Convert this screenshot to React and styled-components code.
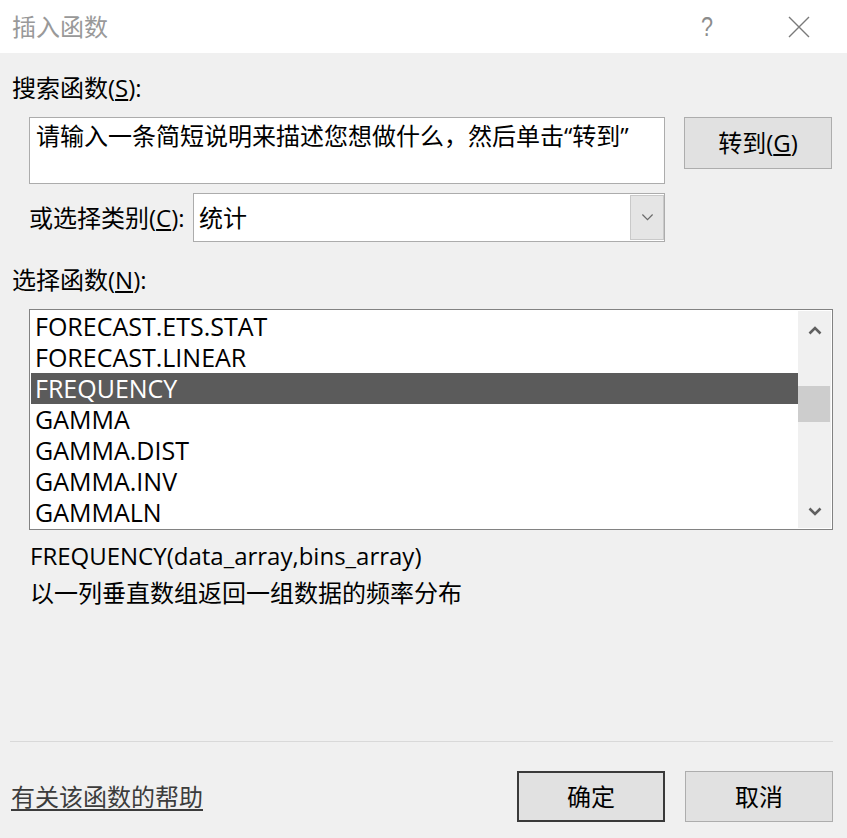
import React from 'react';
import styled, { createGlobalStyle } from 'styled-components';

const Global = createGlobalStyle`
  html, body { margin: 0; padding: 0; background: #f0f0f0; }
  body { font-family: "Open Sans", "Noto Sans CJK SC", sans-serif; }
`;

const Dialog = styled.div`
  width: 847px;
  height: 838px;
  background: #f0f0f0;
  display: flex;
  flex-direction: column;
  overflow: hidden;
  font-family: "Open Sans", "Noto Sans CJK SC", sans-serif;
  font-size: 24px;
  color: #000;
`;

const TitleBar = styled.div`
  height: 53px;
  flex-shrink: 0;
  background: #fff;
  display: flex;
  align-items: center;
  padding: 0 28px 0 12px;
  gap: 57px;
`;

const Title = styled.div`
  flex: 1;
  color: #999;
  line-height: 32px;
`;

const HelpGlyph = styled.span`
  width: 30px;
  text-align: center;
  color: #8c8c8c;
  font-family: "Liberation Sans", sans-serif;
  font-size: 27px;
  line-height: 32px;
  transform: scaleX(0.8);
`;

const CloseBox = styled.div`
  width: 40px;
  height: 32px;
  display: flex;
  align-items: center;
  justify-content: center;
`;

const Body = styled.div`
  flex: 1;
  padding: 0 14px 0 12px;
  display: flex;
  flex-direction: column;
`;

const Label = styled.div`
  line-height: 32px;
  margin-top: ${p => p.$mt}px;
  padding-left: ${p => p.$pl || 0}px;
  white-space: nowrap;
`;

const SearchRow = styled.div`
  display: flex;
  align-items: flex-start;
  gap: 19px;
  margin-top: 13px;
  padding-left: 17px;
`;

const SearchBox = styled.div`
  box-sizing: border-box;
  width: 636px;
  height: 67px;
  border: 1px solid #acacac;
  background: #fff;
  padding: 2px 6px;
  line-height: 32px;
  white-space: nowrap;
  overflow: hidden;
`;

const Button = styled.div`
  box-sizing: border-box;
  width: ${p => p.$w}px;
  height: ${p => p.$h}px;
  border: ${p => (p.$default ? '2px solid #3a3a3a' : '1px solid #adadad')};
  background: #e1e1e1;
  display: flex;
  align-items: center;
  justify-content: center;
  line-height: 32px;
  white-space: nowrap;
`;

const CategoryRow = styled.div`
  display: flex;
  align-items: center;
  margin-top: 9px;
  padding-left: 17px;
`;

const CategoryLabel = styled.div`
  width: 164px;
  line-height: 32px;
  white-space: nowrap;
`;

const Select = styled.div`
  box-sizing: border-box;
  width: 472px;
  height: 49px;
  border: 1px solid #acacac;
  background: #fff;
  display: flex;
  align-items: center;
  padding: 1px 0 1px 5px;
`;

const SelectValue = styled.div`
  flex: 1;
  line-height: 32px;
`;

const DropButton = styled.div`
  box-sizing: border-box;
  width: 34px;
  height: 45px;
  background: #e5e5e5;
  border: 1px solid #c9c9c9;
  display: flex;
  align-items: center;
  justify-content: center;
`;

const ListBox = styled.div`
  box-sizing: border-box;
  width: 804px;
  height: 221px;
  margin-top: 13px;
  margin-left: 17px;
  border: 1px solid #828282;
  background: #fff;
  padding: 1px;
  display: flex;
`;

const Rows = styled.div`
  flex: 1;
  display: flex;
  flex-direction: column;
`;

const Row = styled.div`
  height: 31px;
  line-height: 31px;
  padding-left: 4px;
  font-size: 25px;
  white-space: nowrap;
  background: ${p => (p.$selected ? '#5b5b5b' : 'transparent')};
  color: ${p => (p.$selected ? '#fff' : '#000')};
`;

const ScrollBar = styled.div`
  width: 33px;
  background: #f0f0f0;
  display: flex;
  flex-direction: column;
`;

const ArrowBox = styled.div`
  height: ${p => p.$h}px;
  display: flex;
  align-items: center;
  justify-content: center;
`;

const Track = styled.div`
  flex: 1;
`;

const Thumb = styled.div`
  width: 32px;
  height: 36px;
  margin-top: 37px;
  background: #cdcdcd;
`;

const InfoLine = styled.div`
  line-height: 32px;
  padding-left: 18px;
  margin-top: ${p => p.$mt}px;
  white-space: nowrap;
`;

const Footer = styled.div`
  flex-shrink: 0;
  padding: 0 14px 16px 10px;
  display: flex;
  flex-direction: column;
`;

const Separator = styled.div`
  height: 1px;
  background: #d9d9d9;
`;

const FooterRow = styled.div`
  margin-top: 29px;
  display: flex;
  align-items: center;
  gap: 20px;
`;

const HelpLink = styled.a`
  flex: 1;
  padding-left: 1px;
  color: #3c3c3c;
  text-decoration: underline;
  text-underline-offset: 3px;
  line-height: 32px;
  cursor: pointer;
`;

const Chevron = ({ dir, color = '#606060', w = 14, sw = 2.6 }) => (
  <svg width={w} height={w / 2 + 2} viewBox="0 0 14 9">
    <polyline
      points={dir === 'up' ? '1.5,7.5 7,2 12.5,7.5' : '1.5,1.5 7,7 12.5,1.5'}
      fill="none"
      stroke={color}
      strokeWidth={sw}
    />
  </svg>
);

const rows = [
  'FORECAST.ETS.STAT',
  'FORECAST.LINEAR',
  'FREQUENCY',
  'GAMMA',
  'GAMMA.DIST',
  'GAMMA.INV',
  'GAMMALN',
];

export default function App() {
  return (
    <Dialog>
      <Global />
      <TitleBar>
        <Title>插入函数</Title>
        <HelpGlyph>?</HelpGlyph>
        <CloseBox>
          <svg width="22" height="22" viewBox="0 0 22 22">
            <path d="M1 1 L21 21 M21 1 L1 21" stroke="#7a7a7a" strokeWidth="1.4" fill="none" />
          </svg>
        </CloseBox>
      </TitleBar>
      <Body>
        <Label $mt={19}>搜索函数(<u>S</u>):</Label>
        <SearchRow>
          <SearchBox>请输入一条简短说明来描述您想做什么，然后单击“转到”</SearchBox>
          <Button $w={148} $h={52}>转到(<u>G</u>)</Button>
        </SearchRow>
        <CategoryRow>
          <CategoryLabel>或选择类别(<u>C</u>):</CategoryLabel>
          <Select>
            <SelectValue>统计</SelectValue>
            <DropButton>
              <Chevron dir="down" color="#6a6a6a" w={13} sw={1.3} />
            </DropButton>
          </Select>
        </CategoryRow>
        <Label $mt={22}>选择函数(<u>N</u>):</Label>
        <ListBox>
          <Rows>
            {rows.map(r => (
              <Row key={r} $selected={r === 'FREQUENCY'}>{r}</Row>
            ))}
          </Rows>
          <ScrollBar>
            <ArrowBox $h={38}><Chevron dir="up" /></ArrowBox>
            <Track><Thumb /></Track>
            <ArrowBox $h={34}><Chevron dir="down" /></ArrowBox>
          </ScrollBar>
        </ListBox>
        <InfoLine $mt={10}>FREQUENCY(data_array,bins_array)</InfoLine>
        <InfoLine $mt={5}>以一列垂直数组返回一组数据的频率分布</InfoLine>
      </Body>
      <Footer>
        <Separator />
        <FooterRow>
          <HelpLink>有关该函数的帮助</HelpLink>
          <Button $w={148} $h={51} $default>确定</Button>
          <Button $w={148} $h={51}>取消</Button>
        </FooterRow>
      </Footer>
    </Dialog>
  );
}
